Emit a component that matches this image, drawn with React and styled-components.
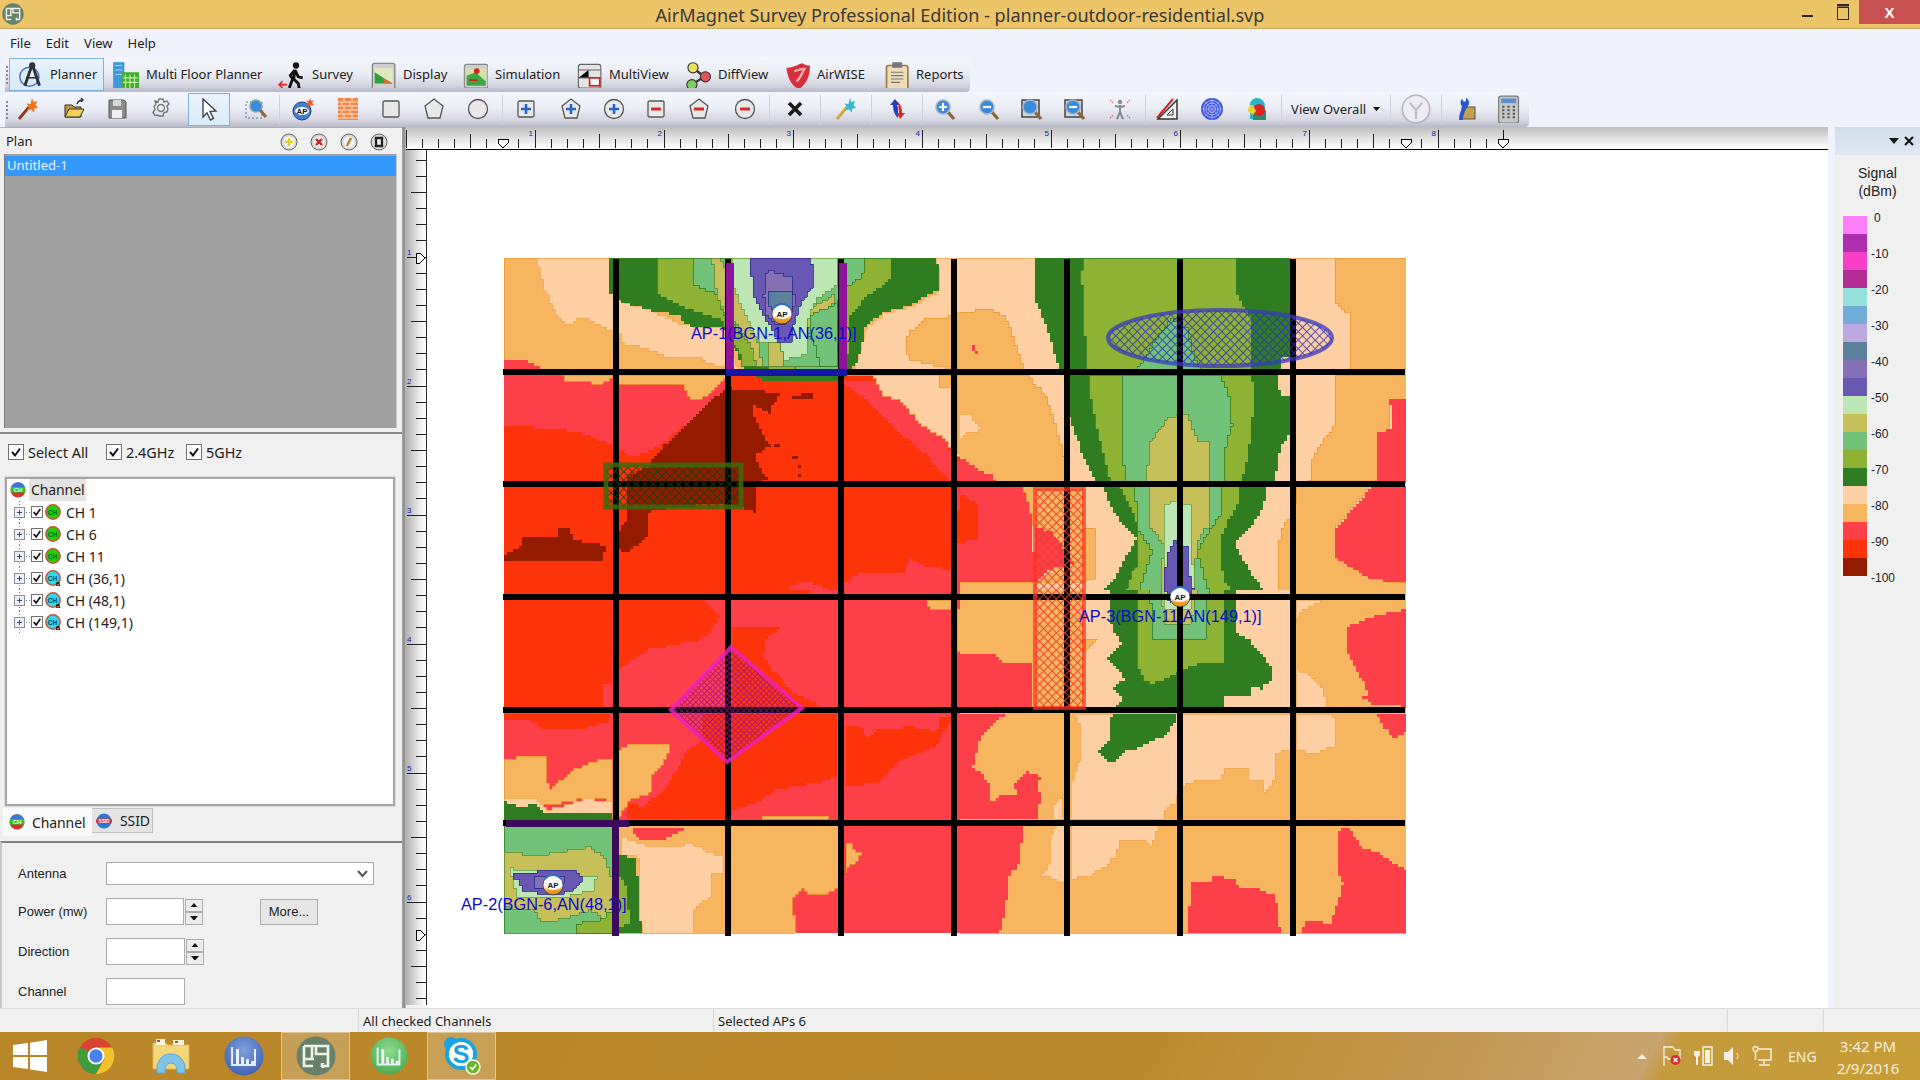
import React from "react";
import styled, { createGlobalStyle } from "styled-components";

const Global = createGlobalStyle`
  html, body { margin: 0; padding: 0; overflow: hidden; background: #f0f3fb; }
  * { box-sizing: border-box; }
`;
const UI = `"Noto Sans", "Open Sans", sans-serif`;
const ARIAL = `"Liberation Sans", Arial, sans-serif`;

const Page = styled.div`
  width: 1920px; height: 1080px; display: flex; flex-direction: column;
  background: #f0f3fb; font-family: ${UI}; color: #222; overflow: hidden;
`;
const TitleBar = styled.div`
  height: 29px; flex: none; display: flex; align-items: flex-start; justify-content: space-between;
  background: #edc569; border-bottom: 1px solid #c9a860; position: relative;
`;
const TitleIcon = styled.div` width: 24px; height: 24px; margin: 3px 0 0 2px; `;
const TitleText = styled.div`
  position: absolute; left: 0; right: 0; top: 3px; text-align: center;
  font-size: 18.1px; line-height: 24px; color: #3a3a3a;
`;
const WinButtons = styled.div` display: flex; align-items: flex-start; `;
const WinBtn = styled.div`
  width: ${p => p.$w}px; height: ${p => p.$close ? 24 : 22}px; display: flex; align-items: center; justify-content: center;
  background: ${p => p.$close ? "#c75050" : "transparent"};
  color: #fff; font: bold 15px ${ARIAL};
`;
const MenuBar = styled.div`
  height: 28px; flex: none; display: flex; align-items: center; padding-left: 10px; gap: 15px;
  font-size: 13px; color: #222;
`;
const MenuItem = styled.span` line-height: 28px; `;
const ToolStrip = styled.div`
  height: 35px; flex: none; display: flex; align-items: center; margin-left: 5px;
  width: ${p => p.$w}px; padding-left: ${p => p.$pl}px;
  background: linear-gradient(180deg, #f4f6fc 0%, #eceef6 45%, #d5d6e2 80%, #b9bac8 100%);
  border-radius: 0 0 4px 0;
  position: relative;
`;
const Grip = styled.div`
  position: absolute; left: 1px; top: 9px; height: 18px; width: 2px;
  background: repeating-linear-gradient(180deg, #8a8a98 0 2px, transparent 2px 4px);
`;
const TabBtn = styled.div`
  width: ${p => p.$w}px; height: 33px; display: flex; align-items: center; gap: ${p => p.$gap ?? 6}px;
  padding-left: ${p => p.$pl ?? 4}px; flex: none; font-size: 13px; line-height: 30px; padding-bottom: 1px; color: #222; white-space: nowrap;
  ${p => p.$active && `
    background: linear-gradient(180deg,#e8f3fc,#d6e9f8);
    border: 1px solid #7db2de;
  `}
`;
const TabIcon = styled.div` width: 27px; height: 27px; flex: none; `;
const ToolCell = styled.div`
  width: ${p => p.$w}px; height: 33px; flex: none; display: flex; align-items: center; justify-content: center;
  font-size: 13px; color: #222; white-space: nowrap; padding-bottom: 1px;
`;
const ActiveTool = styled.div`
  width: 42px; height: 33px; display: flex; align-items: center; justify-content: center;
  background: linear-gradient(180deg,#eaf4fc,#d9ebf9);
  border: 1px solid #7db2de;
`;
const ToolSep = styled.div` width: 1px; height: 30px; flex: none; background: #cfd0dc; `;

const Workspace = styled.div` flex: none; height: 881px; display: flex; background: #f0f3fb; `;
const LeftPanel = styled.div`
  width: 402px; flex: none; display: flex; flex-direction: column; background: #f0f0f0;
`;
const PlanHeader = styled.div`
  height: 27px; flex: none; display: flex; align-items: center; padding-left: 6px; font-size: 13px; color: #222; position: relative;
  background: #f0f0f0; border-top: 1px solid #b0b0b0;
`;
const PlanButtons = styled.div` position: absolute; left: 280px; top: 5px; display: flex; gap: 12px; `;
const RoundBtn = styled.div` width: 18px; height: 18px; `;
const PlanList = styled.div`
  height: 274px; flex: none; margin: 0 5px 0 4px; padding-top: 2px; background: #a0a0a0;
  border-left: 1px solid #7d7d7d; border-right: 1px solid #c8c8c8; 
`;
const PlanRow = styled.div`
  height: 20px; background: #3399ff; color: #e8f2fb; font-size: 13px; line-height: 19px; padding-left: 2px;
`;
const SectionGap = styled.div`
  height: ${p => p.$h}px; flex: none; ${p => p.$line && `border-bottom: 2px solid #8a8a8a;`}
`;
const CheckRow = styled.div`
  height: 41px; flex: none; display: flex; align-items: center; padding: 0 0 5px 8px; font-size: 14.4px; color: #222; 
`;
const CheckLabel = styled.label`
  display: flex; align-items: center; gap: 4px; width: ${p => p.$w}px; flex: none;
`;
const Box = styled.span`
  width: ${p => p.$s}px; height: ${p => p.$s}px; flex: none; background: #fff; border: 1px solid #707070;
  display: flex; align-items: center; justify-content: center;
`;
const Tree = styled.div`
  height: 329px; flex: none; margin: 2px 7px 0 5px; background: #fff; border: 2px solid #a5a5a5; outline: 1px solid #dcdcdc;
  font-size: 14px; color: #222;
`;
const RootRow = styled.div` height: 22px; display: flex; align-items: center; padding-left: 3px; gap: 3px; `;
const RootLabel = styled.span`
  background: #e4e4e4; padding: 0 2px; line-height: 22px; width: 57px; letter-spacing: -.1px;
`;
const TreeRow = styled.div` height: 22px; display: flex; align-items: center; padding-left: 3px; `;
const TreeGap = styled.span` width: 2px; flex: none; `;
const TreeText = styled.span` margin-left: 5px; `;
const Tabs = styled.div`
  height: 28px; flex: none; display: flex; align-items: flex-start; padding-left: 3px; margin-top: 2px; font-size: 14px;
`;
const Tab = styled.div`
  width: ${p => p.$w}px; height: ${p => p.$active ? 28 : 25}px; display: flex; align-items: center; gap: ${p => p.$gap}px; padding-left: ${p => p.$pl}px;
  letter-spacing: -.1px;
  background: ${p => p.$active ? "#fafafa" : "#e4e4e4"};
  ${p => !p.$active && `border: 1px solid #c0c0c0; border-left: none;`}
`;
const FormPanel = styled.div`
  flex: 1; margin-top: 5px; border-top: 2px solid #808080; border-left: 2px solid #c8c8c8; padding-top: 19px;
  font: 13px ${ARIAL}; color: #222; overflow: hidden;
`;
const FieldRow = styled.div`
  height: ${p => p.$h}px; margin-bottom: 13px; display: flex; align-items: center; position: relative;
`;
const FieldLabel = styled.div` width: 104px; padding-left: 16px; flex: none; `;
const SelectBox = styled.div`
  width: 268px; height: 100%; background: #fff; border: 1px solid #acacac; display: flex; align-items: center; justify-content: flex-end; padding-right: 5px;
`;
const TextBox = styled.input`
  width: ${p => p.$w}px; height: 100%; background: #fff; border: 1px solid #acacac; padding: 0; flex: none;
`;
const Spinner = styled.div`
  width: 18px; height: 26px; margin-left: 1px; display: flex; flex-direction: column; flex: none;
`;
const SpinBtn = styled.div`
  flex: 1; background: #ececec; border: 1px solid #acacac; display: flex; align-items: center; justify-content: center;
`;
const MoreBtn = styled.div`
  width: 58px; height: 26px; margin-left: 57px; background: #e6e6e6; border: 1px solid #acacac;
  display: flex; align-items: center; justify-content: center; font-size: 13px;
`;
const Splitter = styled.div`
  width: 4px; flex: none; background: linear-gradient(90deg,#a2a2a2,#8e8e8e 60%,#c6c6c6);
`;
const Center = styled.div` width: 1422px; flex: none; display: flex; flex-direction: column; `;
const HRuler = styled.div`
  height: 23px; flex: none; background: linear-gradient(180deg,#bdbdbd,#e4e4e4 55%,#fff);
  border-bottom: 1px solid #000;
`;
const CenterRow = styled.div` flex: 1; display: flex; min-height: 0; `;
const VRuler = styled.div`
  width: 21px; flex: none; background: linear-gradient(90deg,#b0b0b0,#e6e6e6 60%,#fff);
  border-right: 1px solid #222; margin-bottom: 3px;
`;
const Canvas = styled.div`
  flex: 1; background: #fff; position: relative; overflow: hidden; padding: 108px 0 0 76px;
`;
const ApLabel = styled.div`
  position: absolute; left: ${p => p.$x}px; top: ${p => p.$y}px; color: #0a0ad0; font: 16.300px/18px ${ARIAL}; white-space: nowrap;
`;
const RightGap = styled.div` width: 7px; flex: none; background: #f0f3fb; `;
const Legend = styled.div` width: 85px; flex: none; background: #f0f0f0; display: flex; flex-direction: column; align-items: stretch; `;
const LegendHead = styled.div`
  height: 28px; flex: none; display: flex; align-items: center; justify-content: flex-end; gap: 5px; padding-right: 6px;
  background: linear-gradient(180deg,#d0deeb,#dfe7f2);
`;
const LegendTitle = styled.div`
  margin-top: 9px; padding-left: 0; text-align: center; font: 14px/18px ${ARIAL}; color: #222; height: 42px; 
`;
const LegendBody = styled.div` display: flex; padding-left: 8px; margin-top: -5px; padding-top: 0; `;
const Bar = styled.div` width: 24px; margin-top: 15px; flex: none; display: flex; flex-direction: column; `;
const Swatch = styled.div` height: 18px; background: ${p => p.$c}; `;
const Scale = styled.div` margin-left: 4px; display: flex; flex-direction: column; margin-top: -1px; `;
const Tick = styled.div`
  height: 36px; line-height: 36px; font: 12px/36px ${ARIAL}; color: #222; padding-left: ${p => p.$in ? 3 : 0}px;
`;
const StatusBar = styled.div`
  height: 24px; flex: none; display: flex; background: #f0f0f0; border-top: 1px solid #dcdcdc; font-size: 13px; color: #222;
`;
const StatusCell = styled.div`
  width: ${p => p.$w}px; flex: none; line-height: 24px; padding-left: 4px; ${p => p.$line && `border-left: 1px solid #d8d8d8;`}
`;
const Taskbar = styled.div`
  height: 48px; flex: none; display: flex; align-items: stretch; position: relative; color: #f5efdc;
  background: linear-gradient(118deg,#b98629 0%,#bc8a2e 60%,#c39852 76%,#c8a46f 85.5%,#c49b3d 86.5%,#c79d38 100%);
`;
const TaskCell = styled.div`
  width: ${p => p.$w}px; margin-left: ${p => p.$ml}px; flex: none; display: flex; align-items: center; justify-content: center;
  ${p => p.$active && `background: rgba(255,255,255,.2); border: 1px solid rgba(255,255,255,.4);`}
`;
const Tray = styled.div`
  margin-left: auto; display: flex; align-items: center; font-size: 14px; padding-right: 17px;
`;
const TrayIcon = styled.div` width: ${p => p.$w}px; height: 24px; margin-left: ${p => p.$ml}px; flex: none; `;
const Lang = styled.div` margin-left: 16px; width: 32px; `;
const Clock = styled.div` margin-left: 13px; padding-top: 2px; text-align: center; font-size: 15px; line-height: 22px; width: 70px; white-space: nowrap; `;

/* ---------- icons ---------- */
const I = ({ s = 24, children, vb = "0 0 24 24" }) => <svg width={s} height={s} viewBox={vb} style={{ display: "block" }}>{children}</svg>;

const PlanCircle = ({ s = 24 }) => (
  <I s={s} vb="0 0 40 40">
    <circle cx="20" cy="20" r="19.500" fill="#67806a" />
    <path d="M8 10h24v20h-6v-3M8 10v13h10M16 10v13M20 10v8h12M8 23v7h9" fill="none" stroke="#eef3e8" strokeWidth="2.600" />
    <path d="M27 31v1M27 27v1" stroke="#eef3e8" strokeWidth="2.400" />
  </I>
);
const Bars = ({ s, bg, edge }) => (
  <I s={s} vb="0 0 40 40">
    <defs><radialGradient id={`g${bg.slice(1)}`} cx=".5" cy=".35" r=".7"><stop offset="0" stopColor={edge} /><stop offset="1" stopColor={bg} /></radialGradient></defs>
    <circle cx="20" cy="20" r="19.500" fill={`url(#g${bg.slice(1)})`} />
    <path d="M7 30V11h2v17h3V13h3v15h2v-7h3v7h2v-5h3v5h2v-3h3V13h2v17z" fill="#eef3fb" opacity=".95" />
  </I>
);
const Chrome = () => (
  <I s={38} vb="0 0 40 40">
    <circle cx="20" cy="20" r="19" fill="#d9432f" />
    <path d="M20 20L3.500 10.500A19 19 0 0 0 20 39l9-18z" fill="#3c9c3e" />
    <path d="M20 11h17a19 19 0 0 1-17 28l9-16z" fill="#f2c22a" />
    <circle cx="20" cy="20" r="9" fill="#fff" /><circle cx="20" cy="20" r="7" fill="#4a80e8" />
  </I>
);
const Explorer = () => (
  <I s={40} vb="0 0 40 40">
    <path d="M2 7h13l2 2h21v24H2z" fill="#f5d77a" stroke="#d7b45a" />
    <path d="M5 3h9v6H5zM22 4h11v5H22z" fill="#f7f3d8" /><path d="M6 4h3v2H6zM24 5h3v2h-3z" fill="#b44" />
    <path d="M6 30c3-10 8-12 14-12s11 2 14 12v7h-8v-4c-1-4-3-6-6-6s-5 2-6 6v4H6z" fill="#7fc3e8" stroke="#5aa7d0" />
  </I>
);
const Skype = () => (
  <I s={42} vb="0 0 42 42">
    <circle cx="20" cy="19" r="14" fill="#fff" stroke="#15a4e6" strokeWidth="4" />
    <circle cx="10" cy="9" r="7" fill="#15a4e6" /><circle cx="30" cy="29" r="7" fill="#15a4e6" />
    <circle cx="20" cy="19" r="12" fill="#fff" />
    <text x="20" y="28" textAnchor="middle" fontFamily={ARIAL} fontWeight="700" fontSize="25" fill="#15a4e6">S</text>
    <circle cx="32" cy="32" r="7" fill="#6bb52c" stroke="#fff" strokeWidth="1.400" />
    <path d="M29 32l2.400 2.400 4-5" fill="none" stroke="#fff" strokeWidth="1.600" />
  </I>
);
const WinLogo = () => (
  <I s={34} vb="0 0 34 34">
    <path d="M0 6l15-2v12H0zM17 3.700L34 1v15H17zM0 18h15v12L0 28zM17 18h17v15l-17-2.500z" fill="#fff" />
  </I>
);

const tabIcons = {
  planner: <I s={27}><circle cx="11" cy="14" r="8.500" fill="none" stroke="#4a72bd" strokeWidth="1.300" /><path d="M13.500 3L7 22M13.500 3L20 22" stroke="#2f3238" strokeWidth="2.600" /><circle cx="13.500" cy="4" r="2.800" fill="#2f3238" /><path d="M8 15h11" stroke="#2f3238" strokeWidth="1.400" /></I>,
  multi: <I s={27}><rect x="1" y="1" width="10" height="24" fill="#3f97d8" /><path d="M3 4h6M3 8h6M3 12h6" stroke="#a9d6f2" /><rect x="9" y="10" width="15" height="15" fill="#3fae2e" /><path d="M12 12v12M16 12v12M20 12v12M10 15h13M10 19h13" stroke="#c7f0a0" /></I>,
  survey: <I s={27}><circle cx="16" cy="4" r="2.800" fill="#111" /><path d="M15 8l-4 5 2 3-3 8M15 8l3 6 4 1M15 8l-1 8 4 4 1 5" fill="none" stroke="#111" strokeWidth="2.500" /><path d="M1 21h7M4 18l-3 3 3 3" fill="none" stroke="#d22" strokeWidth="1.400" /></I>,
  display: <I s={27}><rect x="3" y="2" width="20" height="23" rx="2" fill="#cfcfcf" stroke="#777" /><rect x="5" y="6" width="16" height="14" fill="#dfe9c0" /><path d="M5 10l16 10H5z" fill="#2f9f3a" /><path d="M12 15l9 5h-7z" fill="#e86c2a" /></I>,
  sim: <I s={27}><rect x="3" y="3" width="21" height="21" rx="2" fill="#cfcfcf" stroke="#888" /><path d="M5 7h17v15H5z" fill="#d6e2a0" /><path d="M5 13l8-3 9 8v4H5z" fill="#3ca845" /><circle cx="14" cy="9" r="2.500" fill="#d22" /><path d="M7 17h8" stroke="#d22" strokeWidth="1.500" /></I>,
  mv: <I s={27}><rect x="3" y="3" width="20" height="21" rx="2" fill="#e4e4e4" stroke="#666" /><path d="M3 8h20M12 8v7H3M12 15h11" stroke="#666" /><rect x="13" y="15" width="9" height="7" fill="#fff" stroke="#c22" strokeWidth="1.500" /></I>,
  diff: <I s={27}><path d="M8 6l10 8-11 7" fill="none" stroke="#333" strokeWidth="2" /><circle cx="8" cy="6" r="4.500" fill="#f0e060" stroke="#333" /><circle cx="19" cy="14" r="4.500" fill="#d55" stroke="#333" /><circle cx="7" cy="21" r="4.500" fill="#7dd05a" stroke="#333" /></I>,
  wise: <I s={27}><path d="M3 6c6 0 8-2 14-4 3 2 5 2 7 2 0 9-3 17-10 21C7 22 4 14 3 6z" fill="#d82f3c" /><path d="M10 9c4-1 7-2 9-2-2 4-4 9-7 11" fill="none" stroke="#f7b0b0" strokeWidth="2" /></I>,
  reports: <I s={27}><rect x="4" y="4" width="19" height="22" rx="2" fill="#efdcb6" stroke="#9a7b45" strokeWidth="1.500" /><rect x="9" y="1" width="9" height="5" rx="1" fill="#777" /><path d="M8 10h11M8 13h11M8 16h11M8 19h8" stroke="#777" /></I>,
};

const Shape = ({ kind, sign, c = "#e8e8e8" }) => (
  <I>
    {kind === "rect" && <rect x="4" y="4" width="16" height="16" rx="1.500" fill={c} stroke="#555" strokeWidth="1.300" />}
    {kind === "pent" && <path d="M12 2l9 7-3 12H6L3 9z" fill={c} stroke="#555" strokeWidth="1.300" />}
    {kind === "circ" && <circle cx="12" cy="12" r="9.500" fill={c} stroke="#555" strokeWidth="1.300" />}
    {sign === "+" && <path d="M12 7v10M7 12h10" stroke="#2467c9" strokeWidth="2.600" />}
    {sign === "-" && <path d="M7 12h10" stroke="#d62b2b" strokeWidth="3" />}
  </I>
);
const Lens = ({ sign, box }) => (
  <I>
    {box && <rect x="2" y="3" width="17" height="17" fill="#d7d7d7" stroke="#444" strokeWidth="1.500" />}
    <path d="M14 14l7 8" stroke="#8b6a3a" strokeWidth="3.400" />
    <circle cx="10" cy="10" r="7" fill="#3a8be0" stroke="#a8b4c0" strokeWidth="1.600" />
    {sign && <path d={sign === "+" ? "M10 6v8M6 10h8" : "M6 10h8"} stroke="#fff" strokeWidth="2.200" />}
  </I>
);
const Wand = ({ star = "#f0731a", handle = "#8a3b1a" }) => (
  <I><path d="M3 22L13 10" stroke={handle} strokeWidth="2.800" /><path d="M16 1l1.400 4 4-1-2 4 3 3-4 .5-.6 4-2.800-3-4 1 2-3.600-2.500-3.400 4 .6z" fill={star} /></I>
);

const ic = {
  wiz: <Wand />,
  open: <I><path d="M3 8h7l2 2h7v10H3z" fill="#c99a2e" stroke="#333" /><path d="M3 20l4-8h15l-4 8z" fill="#f3d25b" stroke="#333" /><path d="M15 7c1-3 3-4 6-4M19 1l2 2-2 2" fill="none" stroke="#333" strokeWidth="1.300" /></I>,
  save: <I><path d="M4 3h15l2 2v16H4z" fill="#8c8c8c" stroke="#555" /><rect x="8" y="3" width="8" height="6" fill="#d8d8d8" /><rect x="7" y="13" width="10" height="8" fill="#efefef" /></I>,
  gear: <I><path d="M10 2h4l1 3 3-1 2 3-2 2 1 3-1 3-3 .5-1 3.500h-4L9 18l-3 .5-2-3 2-3-1-3 2-2.500-1-3 3 1z" fill="none" stroke="#777" strokeWidth="1.400" /><circle cx="12" cy="11" r="3.500" fill="none" stroke="#777" strokeWidth="1.400" /></I>,
  arrow: <I><path d="M6 2l13 12-6 .5 3.500 7-3 1.500-3.500-7-4 4z" fill="#fff" stroke="#444" strokeWidth="1.400" /></I>,
  zsel: <I><rect x="2" y="5" width="16" height="16" fill="none" stroke="#57a" strokeDasharray="2 2" /><circle cx="12" cy="9" r="6" fill="#3a8be0" stroke="#8aa" strokeWidth="1.500" /><path d="M16 13l6 7" stroke="#8b6a3a" strokeWidth="3" /></I>,
  ap: <I><circle cx="11" cy="14" r="9" fill="#3f7fd0" stroke="#203d7a" /><ellipse cx="11" cy="14" rx="7" ry="4" fill="#fff" /><text x="11" y="17" textAnchor="middle" fontSize="8" fontWeight="700" fontFamily={ARIAL} fill="#111">AP</text><path d="M19 1l1 3 3-.5-2 2.500 2 2.500-3-.5-1 3-1-3-3 .5 2-2.500-2-2.500 3 .5z" fill="#f05a22" /></I>,
  brick: <I><rect x="2" y="1" width="20" height="22" fill="#ef8a4a" /><path d="M2 5h20M2 9h20M2 13h20M2 17h20M2 21h20M8 1v4M16 1v4M6 5v4M14 5v4M8 9v4M16 9v4M6 13v4M14 13v4M8 17v4M16 17v4" stroke="#fbe0c8" strokeWidth="1" /></I>,
  x: <I><path d="M6 6l12 12M18 6L6 18" stroke="#1a1a1a" strokeWidth="3.600" /></I>,
  wand: <Wand star="#35b8c9" handle="#c9a93a" />,
  swap: <I><path d="M10 2l-5 6h3c0 6 2 10 5 13V10c-1-1-1-1-1-2h3z" fill="#2440c0" /><path d="M15 22l5-6h-3c0-5-1-8-4-11l1 11h-2z" fill="#e0252c" /></I>,
  man: <I><circle cx="12" cy="5" r="2.200" fill="#8a8a8a" /><path d="M12 8v7l-3 7M12 15l3 7M7 9l5 1 5-1" fill="none" stroke="#8a8a8a" strokeWidth="2" /><path d="M2 3l3 3M22 3l-3 3M2 21l3-3M22 21l-3-3" stroke="#d66" strokeWidth="1.300" strokeDasharray="1.500 1" /></I>,
  ruler: <I><path d="M2 22L21 3v19z" fill="#f4f4f4" stroke="#333" strokeWidth="1.500" /><path d="M1 21L17 2" stroke="#c22" strokeWidth="2" /><path d="M11 18h6v-6z" fill="none" stroke="#333" /></I>,
  target: <I><circle cx="12" cy="12" r="11" fill="#3c50e0" /><circle cx="12" cy="12" r="8.500" fill="none" stroke="#b8c4ff" /><circle cx="12" cy="12" r="6" fill="none" stroke="#b8c4ff" /><circle cx="12" cy="12" r="3.500" fill="none" stroke="#b8c4ff" /><path d="M1 12h22M12 1v22M4 4l16 16M20 4L4 20" stroke="#b8c4ff" strokeWidth=".5" /></I>,
  color: <I><path d="M5 22V8c0-5 4-7 7-7 4 0 8 3 8 8v13z" fill="#28b6c8" /><path d="M8 23V14l8-6 5 6v9z" fill="#2a8a6a" /><circle cx="14" cy="13" r="6" fill="#d22" /><path d="M3 14c0-5 3-6 5-6l3 6-3 4z" fill="#e8d02e" /></I>,
  ghost: <I s={30}><circle cx="12" cy="12" r="11" fill="#ececf2" stroke="#b5b5c0" strokeWidth="1.300" /><path d="M7 7l5 6 5-6M12 13v7" fill="none" stroke="#bcbcc8" strokeWidth="1.600" /></I>,
  wrench: <I><rect x="10" y="10" width="13" height="12" fill="#c9a04a" stroke="#555" /><path d="M7 23c0-6 2-10 4-13 -3-2-3-6-1-8l2 3 2-1 0-3c3 1 4 5 2 8-2 3-5 8-5 14z" fill="#2458c9" /></I>,
  calc: <I s={28}><rect x="4" y="1" width="17" height="23" rx="2" fill="#c8c8c8" stroke="#777" /><rect x="6" y="3" width="13" height="4" fill="#5a8fd0" /><path d="M7 10h2M11.500 10h2M16 10h2M7 13h2M11.500 13h2M16 13h2M7 16h2M11.500 16h2M16 16h2M7 19h2M11.500 19h2M16 19h2" stroke="#555" strokeWidth="1.700" /></I>,
};

const tools = [
  { c: 28, i: ic.wiz }, { c: 75, i: ic.open }, { c: 116, i: ic.save }, { c: 159, i: ic.gear },
  { c: 210, i: ic.arrow, active: true }, { c: 256, i: ic.zsel }, { c: 279, sep: 1 },
  { c: 304, i: ic.ap }, { c: 348, i: ic.brick },
  { c: 391, i: <Shape kind="rect" /> }, { c: 433, i: <Shape kind="pent" /> }, { c: 477, i: <Shape kind="circ" /> }, { c: 502, sep: 1 },
  { c: 528, i: <Shape kind="rect" sign="+" /> }, { c: 571, i: <Shape kind="pent" sign="+" /> }, { c: 614, i: <Shape kind="circ" sign="+" /> },
  { c: 656, i: <Shape kind="rect" sign="-" /> }, { c: 699, i: <Shape kind="pent" sign="-" /> }, { c: 742, i: <Shape kind="circ" sign="-" /> }, { c: 769, sep: 1 },
  { c: 794, i: ic.x }, { c: 820, sep: 1 }, { c: 844, i: ic.wand }, { c: 871, sep: 1 }, { c: 895, i: ic.swap }, { c: 922, sep: 1 },
  { c: 947, i: <Lens sign="+" /> }, { c: 988, i: <Lens sign="-" /> }, { c: 1032, i: <Lens box /> }, { c: 1074, i: <Lens box sign="-" /> }, { c: 1118, i: ic.man }, { c: 1145, sep: 1 },
  { c: 1168, i: ic.ruler }, { c: 1213, i: ic.target }, { c: 1255, i: ic.color }, { c: 1281, sep: 1 },
  { c: 1335, label: true }, { c: 1390, sep: 1 }, { c: 1416, i: ic.ghost }, { c: 1441, sep: 1 }, { c: 1465, i: ic.wrench }, { c: 1508, i: ic.calc },
];
const toolWidths = tools.map((t, i) => {
  if (t.sep) return 1;
  const prev = i > 0 ? (tools[i - 1].sep ? tools[i - 1].c + 0.5 : (tools[i - 1].c + t.c) / 2) : 5;
  const next = i < tools.length - 1 ? (tools[i + 1].sep ? tools[i + 1].c - 0.5 : (tools[i + 1].c + t.c) / 2) : 1529;
  return next - prev;
});

/* ---------- heatmap ---------- */
const C = { p: "#fdcfa3", o: "#f7b55f", c: "#fd3f4a", r: "#fe330a", d: "#941b00", g: "#2f7d20", v: "#8eb233", m: "#72c279", k: "#c7bf5a", l: "#bce7b4", u: "#6858b3", n: "#8570b5", t: "#5a809c" };
const EDGE = { o: "#e89a30", p: "#f0a850", v: "#2f7d20", m: "#2f7d20", k: "#5a8a30", l: "#6aa040", u: "#2a2a90", n: "#2a2a90", t: "#2a2a90" };
const parse = s => s.trim().split(/\s+/).map(q => q.split(",").map(Number)).map(([x, y]) => [x, y === 0 ? -12 : y]);
const S = 3;
const snap = v => Math.round(v / S) * S;
const stair = (pts, ox, oy) => {
  const P = pts.map(([x, y]) => [ox + x / 3, oy + y / 3]);
  let cx = snap(P[0][0]), cy = snap(P[0][1]);
  let d = `M${cx} ${cy}`;
  for (let i = 1; i <= P.length; i++) {
    const a = P[i - 1], b = P[i % P.length];
    const n = Math.max(1, Math.ceil(Math.max(Math.abs(b[0] - a[0]), Math.abs(b[1] - a[1])) / S));
    for (let t = 1; t <= n; t++) {
      const x = snap(a[0] + (b[0] - a[0]) * t / n), y = snap(a[1] + (b[1] - a[1]) * t / n);
      if (x !== cx) { d += `H${x}`; cx = x; }
      if (y !== cy) { d += `V${y}`; cy = y; }
    }
  }
  return d + "Z";
};

const T1 = [
  ["r", "39,372 1410,372 1410,1030 39,1030"],
  ["o", "39,24 1410,24 1410,372 39,372"],
  ["c", "39,330 110,332 150,355 39,355"],
  ["p", "140,24 360,24 385,150 480,180 580,225 700,235 740,360 660,340 640,325 540,320 460,290 400,280 390,250 365,240 330,225 285,200 230,225 195,185 165,120 150,65"],
  ["p", "1090,360 1130,225 1180,190 1270,165 1350,120 1340,24 1410,24 1410,190 1400,190 1400,360"],
  ["o", "1245,260 1300,205 1365,200 1385,190 1385,355 1260,325 1245,290"],
  ["g", "358,24 1340,24 1350,120 1270,165 1180,190 1130,225 1110,310 1090,360 1060,395 830,395 765,360 740,300 700,235 590,225 570,195 480,180 385,150 358,120"],
  ["v", "497,24 1205,24 1205,90 1130,140 1080,200 1070,360 760,350 740,290 690,205 590,175 500,130"],
  ["m", "612,24 1125,24 1125,70 1060,120 1030,180 1060,355 795,350 790,290 740,230 700,190 680,130 612,100"],
  ["k", "665,24 690,24 725,100 760,180 800,270 815,350 985,345 1030,210 1050,350 795,350 790,290 740,225 700,180 680,130"],
  ["k", "950,180 1030,130 1030,160 955,240"],
  ["l", "725,24 1045,24 1045,100 980,150 960,180 950,240 955,310 880,330 870,280 800,270 760,180 725,100"],
  ["k", "835,280 870,280 880,345 985,345 980,290 990,180 1040,160 1040,180 1015,240 1030,350 830,350"],
  ["m", "965,190 1040,160 1045,350 985,350 980,290 955,250"],
  ["u", "780,24 962,24 972,110 935,160 905,240 905,275 870,275 830,210 790,130"],
  ["n", "830,60 900,80 915,160 905,180 895,215 860,225 825,185 820,130"],
  ["t", "835,125 905,125 905,180 840,180"],
  ["c", "39,375 720,375 720,415 660,460 575,540 490,600 430,620 385,590 270,545 180,535 39,525"],
  ["o", "220,375 370,375 370,385 335,400 220,390"],
  ["o", "385,375 710,375 710,385 650,440 600,450 580,405 470,400 385,400"],
  ["d", "720,415 880,430 850,460 840,490 790,460 790,500 830,580 840,590 790,620 830,690 800,700 800,785 700,760 480,780 470,860 430,900 390,910 385,840 415,800 415,680 480,640 490,615 540,570 600,510 670,440"],
  ["d", "905,435 970,430 970,445 905,450"],
  ["d", "39,915 95,885 95,865 200,865 200,835 235,835 250,870 330,885 355,885 335,935 39,935"],
  ["c", "1060,395 1150,395 1180,430 1240,455 1290,520 1370,570 1385,630 1385,695 1350,650 1230,545 1170,485 1120,440"],
  ["p", "1150,375 1410,375 1410,620 1390,620 1370,570 1290,520 1240,455 1180,430"],
  ["o", "1350,375 1390,375 1385,410 1350,410"],
  ["o", "1400,375 1410,375 1410,620 1400,590"],
  ["c", "1400,640 1410,640 1410,690 1400,690"],
  ["c", "1400,715 1410,715 1410,780 1400,780"],
  ["c", "1060,1000 1100,970 1240,965 1260,925 1300,950 1395,960 1395,1030 1060,1030"],
  ["c", "1400,880 1410,880 1410,1030 1400,1030"],
  ["c", "900,1005 950,995 1040,1030 900,1030"],
  ["d", "848,582 870,582 870,590 848,590"], ["d", "848,616 856,616 856,630 848,630"], ["d", "848,645 856,645 856,660 848,660"], ["d", "848,672 856,672 856,682 848,682"],
  ["d", "903,618 925,618 925,628 903,628"], ["d", "928,645 936,645 936,656 928,656"], ["d", "928,672 936,672 936,682 928,682"],
];
const T2 = [
  ["p", "0,24 1337,24 1337,1030 -10,1030 -10,24"],
  ["o", "1128,24 1337,24 1337,355 1168,355 1168,190 1128,150"],
  ["o", "-10,190 80,175 135,200 160,270 190,355 -10,355"],
  ["c", "35,288 42,285 46,300 55,302 52,315 45,315 44,305 35,300"],
  ["g", "228,24 992,24 990,320 965,320 965,355 298,355 255,210 228,150"],
  ["g", "315,372 965,372 950,390 950,410 965,435 990,435 990,555 960,600 945,700 410,700 370,620 330,500 312,450"],
  ["v", "372,24 830,24 830,130 870,200 870,365 380,365 362,60"],
  ["v", "390,372 870,372 885,430 865,620 845,700 450,700 405,510 390,440"],
  ["m", "527,355 610,230 630,205 680,240 700,320 720,355"],
  ["m", "490,372 780,372 805,440 815,530 790,620 790,700 495,700 490,640 485,430"],
  ["k", "555,695 570,570 620,500 680,490 710,570 745,575 745,695"],
  ["o", "-10,372 200,372 260,450 310,620 320,695 -10,695"],
  ["p", "-10,490 30,490 60,540 30,550 -10,570"],
  ["c", "-10,620 50,660 100,675 105,695 -10,695"],
  ["o", "1128,372 1337,372 1337,445 1290,445 1290,535 1250,560 1248,690 1048,690 1060,610 1120,530 1128,480"],
  ["c", "1290,445 1337,445 1337,695 1250,695 1250,545 1300,535"],
  ["c", "-10,710 190,710 215,790 225,1000 -10,1000"],
  ["r", "-10,725 50,770 50,870 -10,880"],
  ["o", "-10,1000 225,1000 225,1030 -10,1030"],
  ["o", "190,710 370,710 370,830 405,835 405,990 225,1000 275,960 225,830"],
  ["c", "225,830 275,850 310,900 340,940 270,960 225,1000"],
  ["g", "430,712 920,712 910,780 880,825 830,880 830,900 870,970 915,1030 415,1030 460,985 490,935 530,860 500,830 460,780"],
  ["v", "480,712 840,712 835,760 780,870 790,990 820,1030 490,1030 530,930 530,820"],
  ["m", "525,712 785,712 780,800 710,905 745,1030 530,1030 575,900 530,830"],
  ["k", "565,712 745,712 745,830 710,880 700,1030 600,1030 610,880 565,820"],
  ["l", "615,760 650,750 690,770 695,870 700,1030 610,1030 610,870"],
  ["u", "640,870 680,895 680,950 700,1030 610,1030 620,910"],
  ["o", "1008,712 1235,712 1165,790 1128,835 1128,920 1240,990 1337,995 1337,1030 950,1030 950,900 970,820 1000,795"],
  ["c", "1235,712 1337,712 1337,995 1240,990 1128,920 1128,835 1165,790"],
];
const T3 = [
  ["c", "39,0 1410,0 1410,1032 39,1032"],
  ["r", "39,0 960,0 960,30 39,30"],
  ["r", "39,30 368,30 368,285 340,285 340,350 39,350"],
  ["r", "385,30 640,30 690,85 640,150 470,180 440,210 385,240"],
  ["r", "725,110 880,112 830,150 820,200 850,250 900,300 990,350 725,350"],
  ["r", "640,370 1045,370 1045,560 1000,575 860,600 800,640 725,660 720,690 415,690 415,640 460,650 530,590 590,480 640,440"],
  ["r", "1065,410 1110,410 1130,445 1160,420 1260,410 1340,425 1350,385 1390,385 1340,470 1240,510 1170,580 1065,590"],
  ["r", "39,370 360,370 360,395 280,420 170,420 130,395 39,385"],
  ["o", "39,505 165,495 165,575 180,600 240,540 340,505 368,505 368,630 300,620 150,650 100,625 39,620"],
  ["p", "39,620 130,625 170,660 280,625 368,635 368,690 39,690"],
  ["g", "39,635 75,650 130,645 170,670 300,665 360,665 365,695 39,695"],
  ["o", "420,460 535,460 530,510 480,570 480,610 420,630 385,690 385,480"],
  ["o", "815,680 1010,675 1010,690 815,690"],
  ["o", "1315,30 1385,30 1385,190 1380,60 1315,50"],
  ["o", "1400,60 1410,60 1410,180 1400,180"],
  ["o", "385,705 1048,705 1048,890 1010,915 960,915 940,895 905,925 915,1032 385,1032"],
  ["c", "420,710 600,710 530,750 450,750"],
  ["p", "390,740 480,770 560,770 590,760 700,800 700,845 660,850 660,920 605,970 605,1032 456,1032 445,930 445,800 390,790"],
  ["o", "1065,755 1115,795 1065,850"],
  ["m", "39,708 368,708 368,1032 39,1032"],
  ["k", "39,785 130,795 180,790 295,770 345,810 368,880 368,1000 300,960 230,985 160,995 130,960 39,950"],
  ["v", "255,1032 255,1000 320,990 368,960 368,1032"],
  ["l", "60,835 320,860 310,900 230,920 80,920"],
  ["u", "65,845 130,845 150,838 215,838 260,845 265,860 280,870 260,890 240,905 190,915 130,905 95,905 90,880"],
  ["n", "130,855 220,855 225,880 200,900 130,890"],
  ["g", "388,795 440,805 445,930 455,1032 388,1032"],
  ["v", "388,860 405,880 420,1000 388,1020"],
];
const T4 = [
  ["o", "-10,0 1337,0 1337,1032 -10,1032"],
  ["c", "-10,195 95,195 130,215 215,220 215,350 -10,350"],
  ["p", "365,0 1000,0 1000,350 365,350"],
  ["o", "360,150 410,150 370,190"],
  ["p", "1005,30 1085,30 1020,70 1005,100"],
  ["p", "1005,240 1040,250 1090,300 1100,350 1005,350"],
  ["c", "1237,80 1337,57 1337,350 1235,345 1210,315 1230,315 1205,260 1165,180 1165,110"],
  ["g", "450,0 830,0 830,130 870,155 915,210 940,240 935,270 905,300 880,280 870,315 790,320 790,350 460,350 490,320 455,295 495,265 445,200 485,155 455,110"],
  ["v", "530,0 790,0 790,215 700,225 610,270 570,285 530,230"],
  ["m", "570,0 745,0 735,145 575,150"],
  ["k", "600,0 710,0 695,105 615,105"],
  ["l", "615,0 695,0 695,60 615,60"],
  ["u", "610,0 700,0 690,20 630,35"],
  ["c", "-10,370 145,370 95,410 60,450 40,530 90,590 95,640 120,615 170,620 165,575 195,545 255,565 230,590 245,620 230,690 -10,690"],
  ["p", "340,370 990,370 990,480 950,490 945,560 925,600 905,610 905,570 860,570 860,535 790,535 785,570 690,575 670,600 650,620 650,640 620,650 610,690 330,690 335,570 360,500 360,400"],
  ["g", "455,370 650,370 650,400 610,440 545,470 490,490 465,515 445,515 412,480 445,450"],
  ["p", "1005,370 1110,370 1128,400 1125,470 1060,490 1005,475"],
  ["c", "1250,370 1337,370 1337,430 1305,445 1290,430"],
  ["p", "275,650 310,610 310,690 280,690"],
  ["c", "-10,705 195,705 180,780 175,830 150,850 135,970 120,1032 -10,1032"],
  ["p", "330,708 600,708 575,770 560,750 480,750 465,800 440,830 385,860 330,865"],
  ["p", "285,708 312,708 312,880 245,850 265,825 270,740"],
  ["c", "680,1032 695,880 735,880 760,855 825,870 835,890 880,895 945,915 960,1032"],
  ["c", "1020,1032 1035,990 1110,1000 1150,880 1130,830 1130,725 1160,710 1200,770 1250,790 1337,845 1337,1032"],
];

const Layer = ({ data, ox, oy, clip }) => (
  <g clipPath={`url(#${clip})`}>
    {data.map(([k, s], i) => (
      <path key={i} d={stair(parse(s), ox, oy)} fill={C[k]} stroke={EDGE[k] || "none"} strokeWidth={EDGE[k] ? 0.8 : 0} />
    ))}
  </g>
);
const ApMark = ({ x, y, gid }) => (
  <g transform={`translate(${x},${y})`}>
    <circle r="10" fill={`url(#${gid})`} stroke="#123" strokeWidth=".6" />
    <path d="M-8-6a10 10 0 0 1 16 0" fill="none" stroke="#2a6fc0" strokeWidth="2" />
    <ellipse rx="8" ry="5" fill="#fff" />
    <text y="3" textAnchor="middle" fontFamily={ARIAL} fontWeight="700" fontSize="8" fill="#111">AP</text>
  </g>
);
const hatch = (id, c, sz, o) => (
  <pattern id={id} width={sz} height={sz} patternUnits="userSpaceOnUse" patternTransform="rotate(45)">
    <path d={`M0 0H${sz}M0 0V${sz}`} stroke={c} strokeWidth="1.100" strokeOpacity={o} fill="none" />
  </pattern>
);
const VX = [615.7, 728, 841, 954, 1067, 1180, 1293];
const HY = [371.6, 484, 597, 710, 822.7];

const HeatMap = () => (
  <svg width="903" height="680" viewBox="503 258 903 680" style={{ display: "block", overflow: "visible" }} shapeRendering="crispEdges">
    <defs>
      <clipPath id="c1"><rect x="503" y="258" width="457" height="332" /></clipPath>
      <clipPath id="c2"><rect x="960" y="258" width="446" height="332" /></clipPath>
      <clipPath id="c3"><rect x="503" y="590" width="457" height="344" /></clipPath>
      <clipPath id="c4"><rect x="960" y="590" width="446" height="344" /></clipPath>
      {hatch("hG", "#14400c", 6, .85)}{hatch("hB", "#2f2fc0", 6, .8)}{hatch("hR", "#f03a2a", 6, .9)}{hatch("hM", "#9a1090", 4, .75)}
      <linearGradient id="apg" x1="0" y1="0" x2="0" y2="1"><stop offset=".55" stopColor="#fff" /><stop offset=".75" stopColor="#f3a22a" /><stop offset="1" stopColor="#e08a10" /></linearGradient>
    </defs>
    <Layer data={T1} ox={490} oy={250} clip="c1" />
    <Layer data={T2} ox={960} oy={250} clip="c2" />
    <Layer data={T3} ox={490} oy={590} clip="c3" />
    <Layer data={T4} ox={960} oy={590} clip="c4" />
    {VX.map(x => <rect key={x} x={x - 3} y="259" width="6" height="677" fill="#000" />)}
    {HY.map(y => <rect key={y} x="503" y={y - 3} width="902" height="6" fill="#000" />)}
    <rect x="726" y="263" width="8" height="110" fill="#8f149c" />
    <rect x="839" y="263" width="8" height="110" fill="#8f149c" />
    <rect x="726" y="369" width="121" height="7" fill="#1515a8" />
    <rect x="506" y="820" width="123" height="7" fill="#3d0b5e" />
    <rect x="612" y="820" width="7" height="116" fill="#3d0b5e" />
    <g shapeRendering="auto">
      <rect x="606" y="465" width="135" height="42" fill="url(#hG)" stroke="#3c6a0a" strokeWidth="5" strokeOpacity=".85" />
      <ellipse cx="1220" cy="338" rx="112" ry="28" fill="url(#hB)" stroke="#3a3ac0" strokeWidth="4" strokeOpacity=".75" />
      <rect x="1035" y="489" width="49" height="219" fill="url(#hR)" stroke="#ff3322" strokeWidth="4" strokeOpacity=".7" />
      <polygon points="731,647 802,708 727,762 671,710" fill="url(#hM)" stroke="#f020c0" strokeWidth="4" strokeOpacity=".8" />
      <ApMark x={782} y={314} gid="apg" />
      <ApMark x={1180} y={597} gid="apg" />
      <ApMark x={553} y={885} gid="apg" />
    </g>
  </svg>
);

/* ---------- rulers ---------- */
const Marker = ({ x, y, rot = 0, stem }) => (
  <g transform={`translate(${x},${y}) rotate(${rot})`}>
    {stem && <path d="M0-13V-4" stroke="#000" />}
    <path d="M-5-4H5V0L0 5-5 0z" fill="#fff" stroke="#000" />
  </g>
);
const horizontalTicks = [];
for (let i = 0; i < 68; i++) {
  const x = 406 + i * 129 / 8;
  const t = i % 8 === 0 ? 131 : i % 4 === 0 ? 135 : 140;
  horizontalTicks.push(<path key={i} d={`M${x.toFixed(1)} ${t}V149`} stroke="#222" strokeWidth="1" />);
}
const verticalTicks = [];
for (let i = 2; i < 55; i++) {
  const y = 128 + i * 129 / 8;
  const t = i % 8 === 0 ? 408 : i % 4 === 0 ? 412 : 417;
  verticalTicks.push(<path key={i} d={`M${t} ${y.toFixed(1)}H427`} stroke="#222" strokeWidth="1" />);
}
const RulerH = () => (
  <svg width="1422" height="22" viewBox="406 128 1422 22" style={{ display: "block" }} shapeRendering="crispEdges">
    {horizontalTicks}
    {[1, 2, 3, 4, 5, 6, 7, 8].map(n => <text key={n} x={406 + n * 129 - 2} y="137" textAnchor="end" fontFamily={ARIAL} fontSize="8" fill="#1a1ac0">{n}</text>)}
    <Marker x={503} y={144} /><Marker x={1406} y={144} /><Marker x={1503} y={144} stem />
  </svg>
);
const RulerV = () => (
  <svg width="20" height="855" viewBox="407 150 20 855" style={{ display: "block" }} shapeRendering="crispEdges">
    {verticalTicks}
    {[1, 2, 3, 4, 5, 6].map(n => <text key={n} x="408" y={128 + n * 129 - 2} fontFamily={ARIAL} fontSize="8" fill="#1a1ac0">{n}</text>)}
    <Marker x={421} y={258} rot={-90} /><Marker x={421} y={935} rot={-90} />
  </svg>
);

/* ---------- small parts ---------- */
const Check = ({ s = 12 }) => <svg width={s} height={s} viewBox="0 0 12 12"><path d="M2 6l3 3.500L10 2.500" fill="none" stroke="#111" strokeWidth="2" /></svg>;
const ChIcon = ({ a }) => (
  <I s={16} vb="0 0 16 16">
    <circle cx="8" cy="8" r="7.200" fill={a ? "#2fd8ea" : "#22d000"} stroke="#c8503c" strokeWidth="1.500" />
    <text x="7.500" y="10.500" textAnchor="middle" fontFamily={ARIAL} fontSize="6.500" fontWeight="700" fill={a ? "#046" : "#063"}>CH</text>
    {a && <text x="13" y="15.500" textAnchor="middle" fontFamily={ARIAL} fontSize="8" fontWeight="700" fill="#000">a</text>}
  </I>
);
const ChannelRoot = () => (
  <I s={16} vb="0 0 16 16">
    <circle cx="8" cy="8" r="7.500" fill="#d83030" />
    <path d="M1 5a7.500 7.500 0 0 1 14 0z" fill="#3a78d0" />
    <rect x=".8" y="5" width="14.400" height="5.500" fill="#22cc22" />
    <text x="8" y="10" textAnchor="middle" fontFamily={ARIAL} fontSize="6" fontWeight="700" fill="#fff">CH</text>
  </I>
);
const SsidIcon = () => (
  <I s={16} vb="0 0 16 16">
    <circle cx="8" cy="8" r="7.500" fill="#2a78d8" />
    <rect x="0" y="5.500" width="16" height="5" rx="2" fill="#d83030" />
    <text x="8" y="9.800" textAnchor="middle" fontFamily={ARIAL} fontSize="4.800" fontWeight="700" fill="#fff">SSID</text>
  </I>
);
const Expander = () => (
  <svg width="21" height="22" viewBox="0 0 21 22" style={{ display: "block", flex: "none" }} shapeRendering="crispEdges">
    <path d="M9.500 0V22" stroke="#777" strokeDasharray="1 2" />
    <path d="M16 11.500H20" stroke="#777" strokeDasharray="1 2" />
    <rect x="4.500" y="6.500" width="10" height="10" fill="#eef0f4" stroke="#8a8fa0" />
    <path d="M7 11.500H12M9.500 9V14" stroke="#3a4a70" />
  </svg>
);
const Caret = ({ up, s = 8, c = "#111" }) => <svg width={s} height={s * .6} viewBox="0 0 10 6"><path d={up ? "M5 0l5 6H0z" : "M0 0h10L5 6z"} fill={c} /></svg>;

const treeItems = [["CH 1"], ["CH 6"], ["CH 11"], ["CH (36,1)", 1], ["CH (48,1)", 1], ["CH (149,1)", 1]];
const legendColors = ["#fb7ffb", "#ad2fb0", "#f93fc8", "#b32c94", "#96e0dc", "#71add8", "#bba8e0", "#5a809c", "#8570b5", "#6858b3", "#bce7b4", "#c7bf5a", "#72c279", "#8eb233", "#2f7d20", "#fdcfa3", "#f7b55f", "#fd3f4a", "#fe330a", "#941b00"];
const legendTicks = ["0", "-10", "-20", "-30", "-40", "-50", "-60", "-70", "-80", "-90", "-100"];
const tabs = [
  ["Planner", "planner", 95, 7], ["Multi Floor Planner", "multi", 170, 8], ["Survey", "survey", 91, 4], ["Display", "display", 92, 4],
  ["Simulation", "sim", 114, 4], ["MultiView", "mv", 109, 4], ["DiffView", "diff", 99, 4], ["AirWISE", "wise", 99, 4], ["Reports", "reports", 87, 4],
];

export default function App() {
  return (
    <Page>
      <Global />
      <TitleBar>
        <TitleIcon><PlanCircle s={22} /></TitleIcon>
        <TitleText>AirMagnet Survey Professional Edition - planner-outdoor-residential.svp</TitleText>
        <WinButtons>
          <WinBtn $w={20}><svg width="12" height="22"><rect x="0" y="15" width="11" height="2" fill="#2b2b2b" /></svg></WinBtn>
          <WinBtn $w={41}><svg width="24" height="18"><rect x="10.500" y="5.500" width="11" height="12" fill="none" stroke="#2b2b2b" /><rect x="10" y="2" width="12" height="2.500" fill="#2b2b2b" /></svg></WinBtn>
          <WinBtn $w={61} $close>X</WinBtn>
        </WinButtons>
      </TitleBar>
      <MenuBar>
        {["File", "Edit", "View", "Help"].map(m => <MenuItem key={m}>{m}</MenuItem>)}
      </MenuBar>
      <ToolStrip $w={965} $pl={4}>
        <Grip />
        {tabs.map(([t, k, w, pl], i) => (
          <TabBtn key={t} $w={w} $active={i === 0} $pl={pl} $gap={i === 0 ? 6 : 7}>
            <TabIcon>{tabIcons[k]}</TabIcon><span>{t}</span>
          </TabBtn>
        ))}
      </ToolStrip>
      <ToolStrip $w={1524} $pl={0}>
        <Grip />
        {tools.map((t, i) => t.sep ? <ToolSep key={i} /> : (
          <ToolCell key={i} $w={toolWidths[i]}>
            {t.label ? <>View Overall&nbsp;&nbsp;<Caret s={7} /></> : t.active ? <ActiveTool>{t.i}</ActiveTool> : t.i}
          </ToolCell>
        ))}
      </ToolStrip>
      <Workspace>
        <LeftPanel>
          <PlanHeader>
            Plan
            <PlanButtons>
              {[["#e6d21e", "M9 5v8M5 9h8", "#111"], ["#eee", "M6 6l6 6M12 6l-6 6", "#c22"], ["#eee", "M7 13l4-8", "#a83"], ["#eee", "M6 5h6v8H6z", "#222"]].map(([f, d, st], i) => (
                <RoundBtn key={i}>
                  <I s={18} vb="0 0 18 18"><circle cx="9" cy="9" r="8" fill="#d6d6d6" stroke="#666" /><circle cx="9" cy="9" r="5.500" fill={f === "#eee" ? "#f2f2f2" : "#fff"} /><path d={d} stroke={f === "#eee" ? st : f} strokeWidth="2.400" fill="none" /></I>
                </RoundBtn>
              ))}
            </PlanButtons>
          </PlanHeader>
          <PlanList><PlanRow>Untitled-1</PlanRow></PlanList>
          <SectionGap $h={6} $line />
          <CheckRow>
            <CheckLabel $w={98}><Box $s={16}><Check /></Box>Select All</CheckLabel>
            <CheckLabel $w={80}><Box $s={16}><Check /></Box>2.4GHz</CheckLabel>
            <CheckLabel $w={80}><Box $s={16}><Check /></Box>5GHz</CheckLabel>
          </CheckRow>
          <Tree>
            <RootRow><ChannelRoot /><RootLabel>Channel</RootLabel></RootRow>
            {treeItems.map(([t, a]) => (
              <TreeRow key={t}>
                <Expander />
                <Box $s={12}><Check s={10} /></Box>
                <TreeGap />
                <ChIcon a={a} />
                <TreeText>{t}</TreeText>
              </TreeRow>
            ))}
          </Tree>
          <Tabs>
            <Tab $w={89} $pl={6} $gap={7} $active><ChannelRoot />Channel</Tab>
            <Tab $w={61} $pl={4} $gap={8}><SsidIcon />SSID</Tab>
          </Tabs>
          <FormPanel>
            <FieldRow $h={23}>
              <FieldLabel>Antenna</FieldLabel>
              <SelectBox><svg width="11" height="8" viewBox="0 0 11 8"><path d="M1 1l4.500 5L10 1" fill="none" stroke="#555" strokeWidth="2" /></svg></SelectBox>
            </FieldRow>
            <FieldRow $h={27}>
              <FieldLabel>Power (mw)</FieldLabel>
              <TextBox $w={78} />
              <Spinner><SpinBtn><Caret up /></SpinBtn><SpinBtn><Caret /></SpinBtn></Spinner>
              <MoreBtn>More...</MoreBtn>
            </FieldRow>
            <FieldRow $h={27}>
              <FieldLabel>Direction</FieldLabel>
              <TextBox $w={79} />
              <Spinner><SpinBtn><Caret up /></SpinBtn><SpinBtn><Caret /></SpinBtn></Spinner>
            </FieldRow>
            <FieldRow $h={27}>
              <FieldLabel>Channel</FieldLabel>
              <TextBox $w={79} />
            </FieldRow>
          </FormPanel>
        </LeftPanel>
        <Splitter />
        <Center>
          <HRuler><RulerH /></HRuler>
          <CenterRow>
            <VRuler><RulerV /></VRuler>
            <Canvas>
              <HeatMap />
              <ApLabel $x={264} $y={174}>AP-1(BGN-1,AN(36,1)]</ApLabel>
              <ApLabel $x={652} $y={457}>AP-3(BGN-11,AN(149,1)]</ApLabel>
              <ApLabel $x={34} $y={745}>AP-2(BGN-6,AN(48,1)]</ApLabel>
            </Canvas>
          </CenterRow>
        </Center>
        <RightGap />
        <Legend>
          <LegendHead>
            <Caret s={10} />
            <svg width="10" height="10" viewBox="0 0 10 10"><path d="M1 1l8 8M9 1l-8 8" stroke="#111" strokeWidth="2" /></svg>
          </LegendHead>
          <LegendTitle>Signal<br />(dBm)</LegendTitle>
          <LegendBody>
            <Bar>{legendColors.map(c => <Swatch key={c} $c={c} />)}</Bar>
            <Scale>{legendTicks.map((t, i) => <Tick key={t} $in={i === 0}>{t}</Tick>)}</Scale>
          </LegendBody>
        </Legend>
      </Workspace>
      <StatusBar>
        <StatusCell $w={358} />
        <StatusCell $w={355} $line>All checked Channels</StatusCell>
        <StatusCell $w={1014} $line>Selected APs 6</StatusCell>
        <StatusCell $w={96} $line />
        <StatusCell $w={97} $line />
      </StatusBar>
      <Taskbar>
        <TaskCell $w={60} $ml={0}><WinLogo /></TaskCell>
        <TaskCell $w={60} $ml={6}><Chrome /></TaskCell>
        <TaskCell $w={70} $ml={10}><Explorer /></TaskCell>
        <TaskCell $w={70} $ml={3}><Bars s={40} bg="#3a5fae" edge="#7f9fe0" /></TaskCell>
        <TaskCell $w={69} $ml={2} $active><PlanCircle s={40} /></TaskCell>
        <TaskCell $w={69} $ml={4}><Bars s={38} bg="#47a94e" edge="#8fdc90" /></TaskCell>
        <TaskCell $w={69} $ml={4} $active><Skype /></TaskCell>
        <Tray>
          <TrayIcon $w={12}><svg width="12" height="24"><path d="M1 15L6 10l5 5z" fill="#f4f0e0" /></svg></TrayIcon>
          <TrayIcon $w={20} $ml={14}>
            <svg width="20" height="24" viewBox="0 0 20 24"><path d="M2 2v20M2 3h9l2 3h5v9H6l-1-2H2" fill="none" stroke="#f4f0e0" strokeWidth="1.300" /><circle cx="13.500" cy="16" r="5" fill="#d63030" /><path d="M11.500 14l4 4M15.500 14l-4 4" stroke="#fff" strokeWidth="1.300" /></svg>
          </TrayIcon>
          <TrayIcon $w={20} $ml={11}>
            <svg width="20" height="24" viewBox="0 0 20 24"><path d="M2 2v5M6 2v5M1 7h6v4l-2 2v8H3v-8L1 11z" fill="#f4f0e0" /><rect x="10" y="3" width="9" height="18" fill="none" stroke="#f4f0e0" strokeWidth="1.500" /><rect x="12" y="6" width="5" height="13" fill="#f4f0e0" /></svg>
          </TrayIcon>
          <TrayIcon $w={18} $ml={10}>
            <svg width="18" height="24" viewBox="0 0 18 24"><path d="M1 8h4l5-5v18l-5-5H1z" fill="#f4f0e0" /><path d="M14 9q2 3 0 6" fill="none" stroke="#f4f0e0" /></svg>
          </TrayIcon>
          <TrayIcon $w={20} $ml={11}>
            <svg width="20" height="24" viewBox="0 0 20 24"><circle cx="3.500" cy="5" r="2.500" fill="none" stroke="#f4f0e0" strokeWidth="1.300" /><path d="M3.500 8v8M6 5h13v11H6M12 16v4M7 21h11" fill="none" stroke="#f4f0e0" strokeWidth="1.500" /></svg>
          </TrayIcon>
          <Lang>ENG</Lang>
          <Clock>3:42 PM<br />2/9/2016</Clock>
        </Tray>
      </Taskbar>
    </Page>
  );
}
